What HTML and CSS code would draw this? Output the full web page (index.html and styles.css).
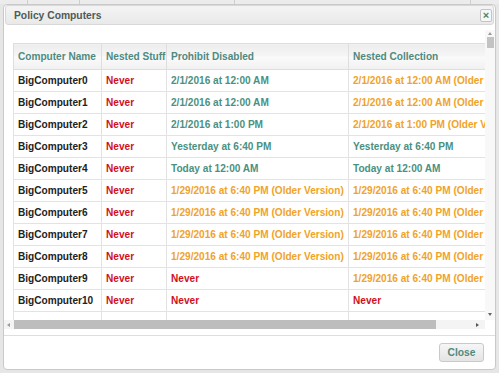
FILE: index.html
```html
<!DOCTYPE html>
<html>
<head>
<meta charset="utf-8">
<link rel="stylesheet" href="styles.css">
</head>
<body>
<div class="backdrop">
  <div class="bg-strip"><span></span><span></span><span></span><span></span></div>
  <div class="dialog">
    <div class="titlebar">
      <span class="title">Policy Computers</span>
      <span class="close-x">×</span>
    </div>
    <div class="scroller">
      <div class="viewport">
        <table class="grid">
          <colgroup>
            <col class="c1"><col class="c2"><col class="c3"><col class="c4">
          </colgroup>
          <thead>
            <tr><th>Computer Name</th><th>Nested Stuff</th><th>Prohibit Disabled</th><th>Nested Collection</th></tr>
          </thead>
          <tbody>
            <tr><td class="name">BigComputer0</td><td class="red">Never</td><td class="green">2/1/2016 at 12:00 AM</td><td class="orange">2/1/2016 at 12:00 AM (Older Version)</td></tr>
            <tr><td class="name">BigComputer1</td><td class="red">Never</td><td class="green">2/1/2016 at 12:00 AM</td><td class="orange">2/1/2016 at 12:00 AM (Older Version)</td></tr>
            <tr><td class="name">BigComputer2</td><td class="red">Never</td><td class="green">2/1/2016 at 1:00 PM</td><td class="orange">2/1/2016 at 1:00 PM (Older Version)</td></tr>
            <tr><td class="name">BigComputer3</td><td class="red">Never</td><td class="green">Yesterday at 6:40 PM</td><td class="green">Yesterday at 6:40 PM</td></tr>
            <tr><td class="name">BigComputer4</td><td class="red">Never</td><td class="green">Today at 12:00 AM</td><td class="green">Today at 12:00 AM</td></tr>
            <tr><td class="name">BigComputer5</td><td class="red">Never</td><td class="orange">1/29/2016 at 6:40 PM (Older Version)</td><td class="orange">1/29/2016 at 6:40 PM (Older Version)</td></tr>
            <tr><td class="name">BigComputer6</td><td class="red">Never</td><td class="orange">1/29/2016 at 6:40 PM (Older Version)</td><td class="orange">1/29/2016 at 6:40 PM (Older Version)</td></tr>
            <tr><td class="name">BigComputer7</td><td class="red">Never</td><td class="orange">1/29/2016 at 6:40 PM (Older Version)</td><td class="orange">1/29/2016 at 6:40 PM (Older Version)</td></tr>
            <tr><td class="name">BigComputer8</td><td class="red">Never</td><td class="orange">1/29/2016 at 6:40 PM (Older Version)</td><td class="orange">1/29/2016 at 6:40 PM (Older Version)</td></tr>
            <tr><td class="name">BigComputer9</td><td class="red">Never</td><td class="red">Never</td><td class="orange">1/29/2016 at 6:40 PM (Older Version)</td></tr>
            <tr><td class="name">BigComputer10</td><td class="red">Never</td><td class="red">Never</td><td class="red">Never</td></tr>
            <tr class="filler"><td></td><td></td><td></td><td></td></tr>
          </tbody>
        </table>
      </div>
      <div class="vscroll">
        <span class="arrow-up"></span>
        <span class="vthumb"></span>
        <span class="vspacer"></span>
        <span class="arrow-down"></span>
      </div>
      <div class="hscroll">
        <span class="arrow-left"></span>
        <span class="hthumb"></span>
        <span class="hspacer"></span>
        <span class="arrow-right"></span>
      </div>
      <div class="corner"></div>
    </div>
    <div class="footer">
      <button class="btn-close">Close</button>
    </div>
  </div>
</div>
</body>
</html>
```

FILE: styles.css
```css
html, body {
  margin: 0;
  padding: 0;
}
body {
  width: 499px;
  height: 373px;
  overflow: hidden;
  background: #e6e6e6;
  font-family: "Liberation Sans", Arial, sans-serif;
  font-size: 10.1px;
}
.backdrop {
  position: relative;
  width: 499px;
  height: 373px;
  box-sizing: border-box;
  padding: 4px 3px 3px 3px;
}
.bg-strip {
  position: absolute;
  left: 0;
  top: 0;
  width: 499px;
  height: 4px;
  background: #ececec;
}
.bg-strip span {
  position: absolute;
  top: 0;
  width: 1px;
  height: 4px;
  background: #cfcfcf;
}
.bg-strip span:nth-child(1) { left: 27px; }
.bg-strip span:nth-child(2) { left: 79px; }
.bg-strip span:nth-child(3) { left: 234px; }
.bg-strip span:nth-child(4) { left: 470px; }

.dialog {
  position: relative;
  width: 493px;
  height: 366px;
  box-sizing: border-box;
  background: #fff;
  border: 1px solid #c9c9c9;
  border-radius: 4px;
  display: flex;
  flex-direction: column;
}
.titlebar {
  margin: 0 1px;
  height: 20px;
  box-sizing: border-box;
  border: 1px solid #d8d8d8;
  border-radius: 3px;
  background: linear-gradient(#f4f4f4, #e9e9e9);
  display: flex;
  align-items: center;
  justify-content: space-between;
  padding: 0 1px 0 8px;
}
.title {
  font-weight: bold;
  color: #4e5a57;
  font-size: 10.3px;
}
.close-x {
  width: 12px;
  height: 13px;
  box-sizing: border-box;
  border: 1px solid #c4c4c4;
  border-radius: 2px;
  background: #f7f7f7;
  color: #3d8a6e;
  font-weight: bold;
  font-size: 11px;
  line-height: 10px;
  text-align: center;
}
.scroller {
  margin-top: 5px;
  height: 299px;
  display: grid;
  grid-template-columns: 481px 10px;
  grid-template-rows: 290px 9px;
}
.viewport {
  overflow: hidden;
  padding: 13px 0 0 9px;
  box-sizing: border-box;
}
.grid {
  border-collapse: collapse;
  table-layout: fixed;
  width: 540px;
}
.c1 { width: 88px; }
.c2 { width: 65px; }
.c3 { width: 182px; }
.c4 { width: 205px; }
.grid th, .grid td {
  height: 22px;
  box-sizing: border-box;
  padding: 0 4px;
  text-align: left;
  font-weight: bold;
  font-size: 10.1px;
  white-space: nowrap;
  overflow: hidden;
  border: 1px solid #e3e3e3;
}
.grid th {
  height: 26px;
  color: #4f8a80;
  background: linear-gradient(#ededed, #f5f5f5 45%, #fafafa 50%, #f1f1f1);
  border-color: #dedede;
}
.grid td.name { color: #222; }
.grid td.red { color: #d0101c; }
.grid td.green { color: #4a9182; }
.grid td.orange { color: #f0a32a; }

.vscroll {
  display: flex;
  flex-direction: column;
  align-items: center;
  background: #f8f8f8;
  padding: 2px 0 4px;
  box-sizing: border-box;
}
.arrow-up {
  width: 0;
  height: 0;
  border-left: 2px solid transparent;
  border-right: 2px solid transparent;
  border-bottom: 3px solid #9a9a9a;
}
.vthumb {
  margin-top: 2px;
  width: 7px;
  height: 11px;
  background: #c3c3c3;
}
.vspacer { flex: 1; }
.arrow-down {
  width: 0;
  height: 0;
  border-left: 2px solid transparent;
  border-right: 2px solid transparent;
  border-top: 3px solid #666;
}
.hscroll {
  display: flex;
  align-items: center;
  background: #f4f4f4;
  padding: 0 6px 0 3px;
}
.arrow-left {
  width: 0;
  height: 0;
  border-top: 2px solid transparent;
  border-bottom: 2px solid transparent;
  border-right: 3px solid #9a9a9a;
}
.hthumb {
  margin-left: 4px;
  width: 422px;
  height: 9px;
  background: #bdbdbd;
}
.hspacer { flex: 1; }
.arrow-right {
  width: 0;
  height: 0;
  border-top: 2px solid transparent;
  border-bottom: 2px solid transparent;
  border-left: 3px solid #555;
}
.corner { background: #fff; }

.footer {
  margin-top: 6px;
  border-top: 1px solid #dedede;
  display: flex;
  justify-content: flex-end;
  padding: 7px 11px 0 0;
}
.btn-close {
  width: 45px;
  height: 19px;
  box-sizing: border-box;
  border: 1px solid #c9c9c9;
  border-radius: 3px;
  background: linear-gradient(#f6f6f6, #e4e4e4);
  color: #4f8a80;
  font-family: "Liberation Sans", Arial, sans-serif;
  font-weight: bold;
  font-size: 10.3px;
  padding: 0;
}
```
